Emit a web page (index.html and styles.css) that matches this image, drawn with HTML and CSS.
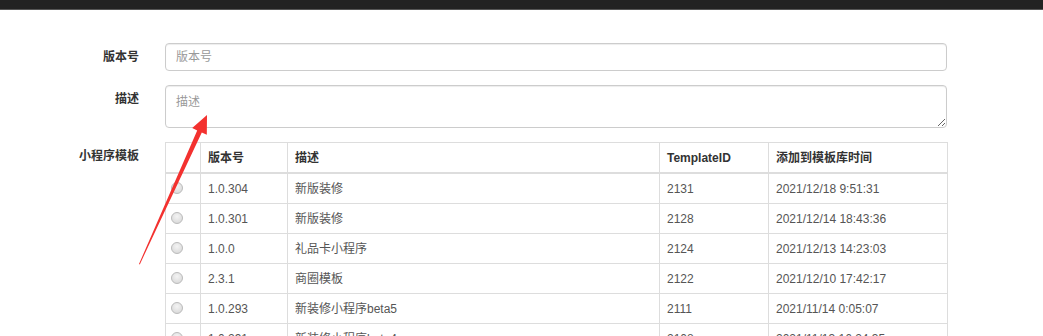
FILE: index.html
```html
<!DOCTYPE html>
<html lang="zh-CN">
<head>
    <meta charset="UTF-8">
    <title>提交小程序模板</title>
    <link rel="stylesheet" href="styles.css">
</head>
<body>
    <div class="navbar"></div>
    <div class="page">
        <form class="form-horizontal">
            <label class="control-label">版本号</label>
            <input class="form-control" type="text" placeholder="版本号">

            <label class="control-label">描述</label>
            <textarea class="form-control textarea" placeholder="描述"></textarea>

            <label class="control-label">小程序模板</label>
            <table class="table">
                <colgroup>
                    <col class="c-radio"><col class="c-ver"><col class="c-desc"><col class="c-id"><col class="c-time">
                </colgroup>
                <thead>
                    <tr><th></th><th>版本号</th><th>描述</th><th>TemplateID</th><th>添加到模板库时间</th></tr>
                </thead>
                <tbody>
                    <tr><td><span class="radio"></span></td><td>1.0.304</td><td>新版装修</td><td>2131</td><td>2021/12/18 9:51:31</td></tr>
                    <tr><td><span class="radio"></span></td><td>1.0.301</td><td>新版装修</td><td>2128</td><td>2021/12/14 18:43:36</td></tr>
                    <tr><td><span class="radio"></span></td><td>1.0.0</td><td>礼品卡小程序</td><td>2124</td><td>2021/12/13 14:23:03</td></tr>
                    <tr><td><span class="radio"></span></td><td>2.3.1</td><td>商圈模板</td><td>2122</td><td>2021/12/10 17:42:17</td></tr>
                    <tr><td><span class="radio"></span></td><td>1.0.293</td><td>新装修小程序beta5</td><td>2111</td><td>2021/11/14 0:05:07</td></tr>
                    <tr><td><span class="radio"></span></td><td>1.0.291</td><td>新装修小程序beta4</td><td>2108</td><td>2021/11/13 16:24:35</td></tr>
                </tbody>
            </table>
        </form>

        <!-- annotation arrow drawn over the form -->
        <svg class="arrow" width="1043" height="336" viewBox="0 0 1043 336">
            <polygon points="139,264 197.2,130.4 192.2,128.1 207,115 206.8,134.7 201.8,132.4 139.8,264.4" fill="#f3312f"/>
        </svg>
    </div>
</body>
</html>
```

FILE: styles.css
```css
body {
    margin: 0;
    font-family: "Liberation Sans", Arial, "Noto Sans CJK SC", sans-serif;
    font-size: 12px;
    color: #333;
    background: #fff;
    overflow: hidden;
}
.navbar {
    height: 9px;
    background-color: #222;
    border-bottom: 1px solid #555;
}
.page {
    position: relative;
    padding-top: 33px;
}
.form-horizontal {
    display: grid;
    grid-template-columns: 139px 782px;
    column-gap: 26px;
    row-gap: 14px;
    align-items: start;
}
.control-label {
    text-align: right;
    font-weight: bold;
    line-height: 17px;
    padding-top: 6px;
    color: #333;
}
.form-control {
    box-sizing: border-box;
    width: 100%;
    height: 28px;
    margin: 0;
    padding: 5px 10px;
    font-family: inherit;
    font-size: 12px;
    color: #555;
    border: 1px solid #ccc;
    border-radius: 4px;
    box-shadow: inset 0 1px 1px rgba(0,0,0,0.075);
    outline: none;
}
.form-control::placeholder {
    color: #999;
}
.textarea {
    height: 43px;
    padding-top: 6px;
    resize: vertical;
    display: block;
}
.table {
    width: 782px;
    border-collapse: collapse;
    table-layout: fixed;
    border: 1px solid #ddd;
}
.c-radio { width: 35px; }
.c-ver { width: 87px; }
.c-desc { width: 372px; }
.c-id { width: 109px; }
.c-time { width: 179px; }
.table th,
.table td {
    padding: 7px 7px 5px;
    line-height: 17px;
    text-align: left;
    border: 1px solid #ddd;
    white-space: nowrap;
    overflow: hidden;
}
.table th {
    font-weight: bold;
    color: #333;
    border-bottom-width: 2px;
}
.table td {
    color: #555;
}
.radio {
    display: inline-block;
    width: 10px;
    height: 10px;
    margin-left: -2px;
    vertical-align: -1px;
    border: 1px solid #bbb;
    border-radius: 50%;
    background: radial-gradient(circle at 50% 35%, #f4f4f4, #d4d4d4);
}
.arrow {
    position: absolute;
    left: 0;
    top: -10px;
    pointer-events: none;
}
```
